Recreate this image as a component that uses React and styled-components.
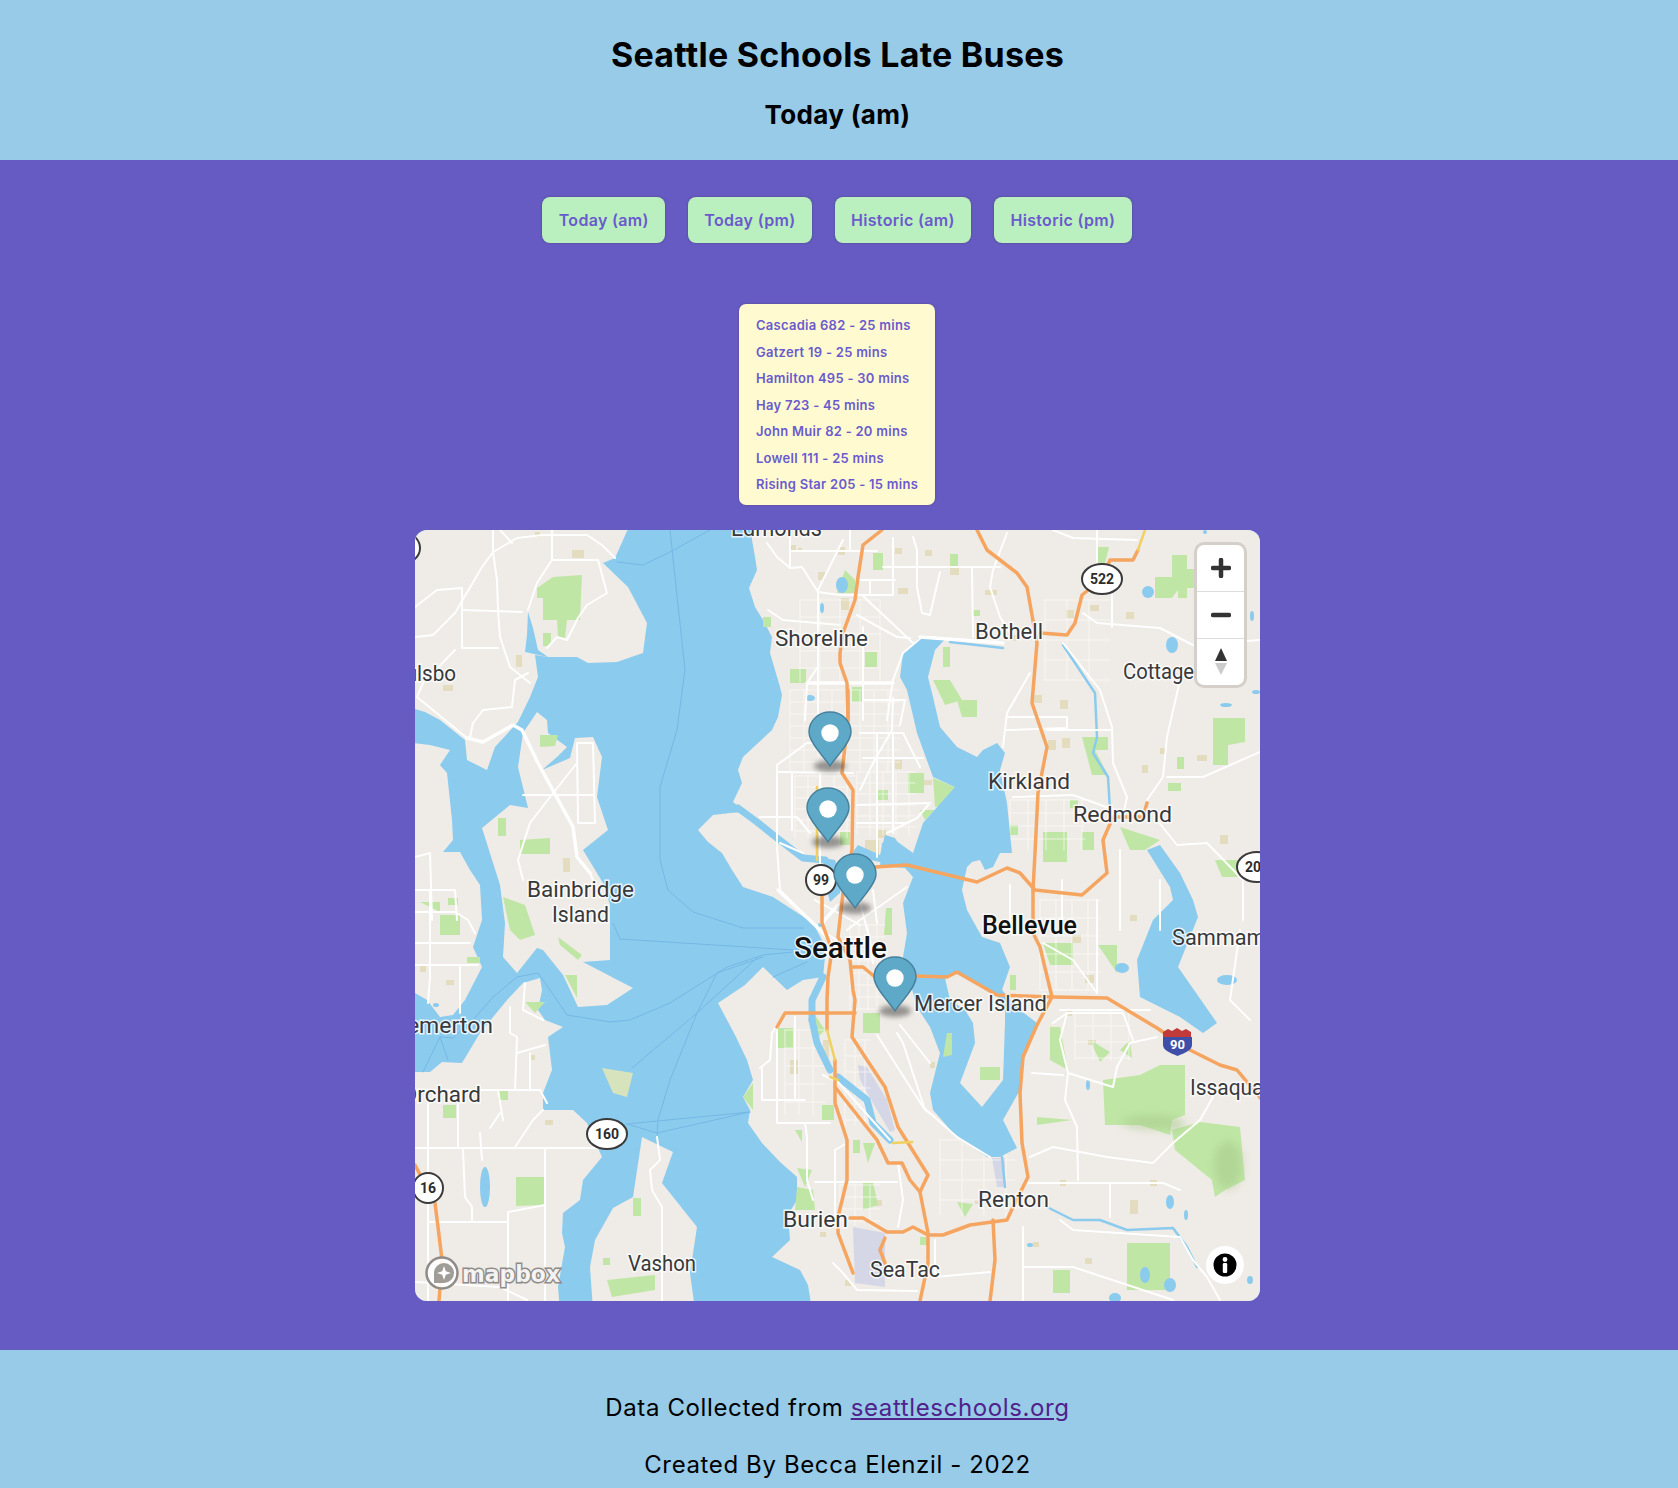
import React from 'react'
import styled, { createGlobalStyle } from 'styled-components'

const GlobalStyle = createGlobalStyle`
  html, body {
    margin: 0;
    padding: 0;
    background: #665ac3;
    font-family: Inter, "Liberation Sans", sans-serif;
  }
`

const Header = styled.header`
  height: 160px;
  padding-right: 3px;
  background: #97cbe8;
  color: #000;
  display: flex;
  flex-direction: column;
  align-items: center;
`

const Title = styled.h1`
  margin: 34px 0 0;
  font-size: 34px;
  line-height: 42px;
  font-weight: 700;
  letter-spacing: 0.25px;
`

const Subtitle = styled.h2`
  margin: 23px 0 0;
  font-size: 26px;
  line-height: 32px;
  font-weight: 700;
  letter-spacing: 0.35px;
`

const Main = styled.main`
  height: 1190px;
  box-sizing: border-box;
  padding: 37px 3px 0 0;
  background: #665ac3;
  display: flex;
  flex-direction: column;
  align-items: center;
`

const ButtonRow = styled.nav`
  display: flex;
  gap: 22.5px;
  margin-right: 1px;
`

const TabButton = styled.button`
  height: 46px;
  padding: 0 16.5px;
  border: 0;
  border-radius: 8px;
  background: #baf0bf;
  box-shadow: 0 0 2px rgba(40, 60, 40, 0.5);
  color: #6a5acd;
  font-family: Inter, "Liberation Sans", sans-serif;
  font-size: 16px;
  font-weight: 600;
  letter-spacing: 0.32px;
`

const LateCard = styled.ul`
  width: 196px;
  height: 201px;
  box-sizing: border-box;
  margin: 61px 1px 0 0;
  padding: 8px 0 0 17px;
  list-style: none;
  border-radius: 7px;
  background: #fffad0;
  box-shadow: 0 0 2px rgba(60, 60, 30, 0.45);
  color: #6a5acd;
  font-size: 13px;
  font-weight: 600;
  letter-spacing: 0.27px;
`

const LateRow = styled.li`
  height: 26.5px;
  line-height: 26.5px;
  white-space: nowrap;
`

const MapFrame = styled.div`
  position: relative;
  width: 845px;
  height: 771px;
  margin-top: 25px;
  overflow: hidden;
  border-radius: 12px;
  background: #8bcbee;
`

const MapArt = styled.svg`
  display: block;
  width: 845px;
  height: 771px;
`

const Water = styled.g`
  fill: #8bcbee;
`

const Land = styled.g`
  fill: #efebe6;
`

const Patches = styled.g`
  fill: ${props => props.$fill};
  opacity: ${props => props.$opacity || 1};
  filter: ${props => (props.$soft ? `blur(${props.$soft}px)` : 'none')};
`

const Lines = styled.g`
  fill: none;
  stroke: ${props => props.$color};
  stroke-width: ${props => props.$width}px;
  stroke-linejoin: round;
  stroke-linecap: round;
  opacity: ${props => props.$opacity || 1};
`

const PlaceName = styled.text`
  font-family: Roboto, "Noto Sans", sans-serif;
  font-size: ${props => props.$size || 22}px;
  font-weight: ${props => props.$weight || 400};
  fill: ${props => props.$fill || '#37393b'};
  stroke: rgba(255, 255, 255, 0.8);
  stroke-width: 3px;
  paint-order: stroke;
`

const ShieldText = styled.text`
  font-family: Roboto, "Noto Sans", sans-serif;
  font-size: ${props => props.$size || 14}px;
  font-weight: 700;
  fill: #2c2c2c;
  text-anchor: middle;
`

const LogoText = styled.text`
  font-family: "DejaVu Sans", sans-serif;
  font-size: 23px;
  font-weight: 700;
  fill: rgba(255, 255, 255, 0.9);
  stroke: #8f8b86;
  stroke-width: 3px;
  paint-order: stroke;
`

const PinMark = styled.svg`
  position: absolute;
  left: ${props => props.$x - 415 - 24}px;
  top: ${props => props.$tip - 530 - 55}px;
  width: 48px;
  height: 68px;
  overflow: visible;
`

const PinShadow = styled.ellipse`
  fill: rgba(60, 60, 60, 0.5);
  filter: blur(2.5px);
`

const Controls = styled.div`
  position: absolute;
  top: 15px;
  right: 16px;
  width: 47px;
  border-radius: 7px;
  background: #fff;
  box-shadow: 0 0 0 3px #d4cfc9;
  display: flex;
  flex-direction: column;
`

const ControlButton = styled.div`
  height: 46px;
  display: flex;
  align-items: center;
  justify-content: center;
  border-top: ${props => (props.$first ? '0' : '1px solid #ddd')};
`

const InfoButton = styled.div`
  position: absolute;
  right: 16px;
  bottom: 17px;
  width: 38px;
  height: 38px;
  border-radius: 50%;
  background: #fff;
  display: flex;
  align-items: center;
  justify-content: center;
`

const Footer = styled.footer`
  height: 138px;
  box-sizing: border-box;
  padding: 43px 3px 0 0;
  background: #97cbe8;
  color: #000;
  font-size: 24px;
  line-height: 29px;
  letter-spacing: 0.62px;
  text-align: center;
  overflow: hidden;
`

const FooterLine = styled.p`
  margin: 0 0 28px;
`

const SourceLink = styled.a`
  color: #50228c;
`

const tabs = ['Today (am)', 'Today (pm)', 'Historic (am)', 'Historic (pm)']

const lateBuses = [
  'Cascadia 682 - 25 mins',
  'Gatzert 19 - 25 mins',
  'Hamilton 495 - 30 mins',
  'Hay 723 - 45 mins',
  'John Muir 82 - 20 mins',
  'Lowell 111 - 25 mins',
  'Rising Star 205 - 15 mins'
]

const landShapes = [
  // east side mainland
  '752,520 752,540 755,557 757,570 749,588 755,607 763,620 772,637 770,653 780,687 782,695 778,717 772,730 743,757 738,770 742,783 733,802 745,812 730,813 713,815 698,830 708,842 722,853 732,870 743,887 773,897 793,910 813,923 822,940 825,957 823,977 803,980 787,990 763,967 745,985 718,1003 735,1035 747,1060 753,1080 743,1097 750,1110 748,1123 762,1143 780,1162 797,1177 797,1200 788,1215 790,1240 772,1257 800,1270 808,1285 812,1310 1270,1310 1270,520',
  // north kitsap
  '405,520 632,520 615,558 603,563 628,587 647,623 643,653 617,662 588,663 577,657 548,657 535,655 538,677 530,697 518,722 495,747 487,770 467,760 465,740 440,720 425,712 405,706',
  // kitsap middle
  '405,742 430,745 450,750 440,765 447,773 452,820 453,840 443,852 460,852 470,870 480,885 482,920 473,947 482,967 465,1000 453,1015 440,1017 427,1000 415,993 405,990',
  // kitsap south
  '405,1072 430,1072 442,1062 462,1063 480,1033 507,1000 523,983 540,978 542,990 538,1010 545,1020 563,1027 548,1037 552,1070 543,1093 543,1110 573,1110 587,1123 602,1157 583,1180 580,1200 563,1213 562,1233 565,1247 558,1287 560,1310 405,1310',
  // bainbridge
  '537,712 547,720 548,733 567,747 557,757 542,770 570,758 575,738 593,737 602,757 597,797 608,830 583,850 603,883 610,905 610,960 583,962 633,988 607,1005 578,1007 563,975 543,950 537,948 517,973 503,957 505,923 500,885 482,828 510,805 528,808 518,767 523,733',
  // vashon
  '642,1137 673,1152 662,1183 697,1227 690,1273 695,1310 593,1310 590,1267 595,1240 613,1208 633,1197'
]

const lakes = [
  '920,637 947,637 935,650 928,677 933,697 940,727 957,747 977,757 983,750 997,743 1005,753 1000,770 1007,803 1012,853 1000,853 993,867 985,870 980,860 972,862 967,867 962,890 967,910 982,937 1000,943 1010,967 1002,990 1020,1010 1037,1023 1023,1057 1020,1090 1003,1120 1017,1148 1000,1157 987,1157 953,1133 933,1110 930,1093 940,1053 930,1027 917,1007 903,957 907,933 903,903 913,877 905,868 880,866 882,843 895,840 913,853 923,823 955,787 933,777 917,733 907,690 900,677 903,653',
  '1147,850 1160,845 1180,873 1193,900 1198,917 1178,967 1217,1023 1203,1033 1180,1017 1140,997 1137,960 1153,920 1173,900 1170,887',
  '823,858 835,860 843,880 840,893 830,902 825,883',
  '525,652 527,635 528,612 533,628 538,650 548,657',
  '858,845 880,855 885,835 895,838 905,855 880,862 850,856'
]

const mercer = '945,978 957,974 997,995 1005,1012 1005,1023 1003,1080 982,1107 960,1083 975,1043 973,1023 965,1010 950,1000'

const ponds = [
  [842, 585, 6, 8], [810, 698, 5, 3], [1148, 592, 6, 6], [1172, 645, 6, 8], [485, 1187, 5, 20],
  [1227, 980, 10, 5], [1122, 968, 7, 5], [1170, 1202, 4, 7], [1186, 1215, 2, 5], [1145, 1275, 5, 8],
  [1170, 1285, 6, 7], [1115, 1298, 6, 5], [1088, 1085, 2, 5], [822, 608, 2, 5], [1205, 532, 2, 2],
  [1256, 692, 4, 2], [1226, 705, 6, 2], [1252, 616, 2, 5], [1030, 1245, 3, 2], [1250, 1280, 3, 4],
  [436, 1005, 3, 2], [820, 925, 2, 2]
]

const parks = [
  '537,588 553,577 582,575 580,620 567,620 565,638 558,637 557,620 543,620 543,598 537,598',
  '543,633 551,633 551,646 543,646', '540,735 558,735 555,746 540,747', '520,840 550,838 550,854 520,854',
  '498,818 506,818 506,836 498,836', '503,897 525,905 535,935 520,940 510,930', '558,937 582,955 578,960 560,945',
  '565,975 577,975 577,998', '525,1002 545,1002 535,1013', '440,915 460,915 460,935 440,935',
  '467,957 480,957 480,963 467,963', '443,1105 456,1105 456,1118 443,1118', '498,1090 508,1090 508,1100 498,1100',
  '743,1097 753,1083 753,1110', '778,1028 793,1028 793,1048 778,1048', '516,1177 544,1177 544,1205 516,1206',
  '607,1280 655,1275 655,1290 612,1297', '633,1198 641,1198 641,1216 633,1216', '603,1258 610,1258 610,1265 603,1265',
  '822,1105 834,1105 834,1120 822,1120', '853,1140 860,1140 860,1153 853,1153', '863,1143 875,1143 868,1163',
  '863,1182 873,1182 878,1205 863,1210', '797,1168 812,1170 805,1187', '797,1187 813,1190 815,1210 795,1210',
  '863,1013 880,1013 880,1033 863,1033', '957,1202 973,1204 965,1217', '920,1237 928,1237 928,1245 920,1245',
  '980,1052 988,1052 988,1060 980,1060', '980,1067 1000,1067 1000,1080 980,1080', '845,570 855,580 855,593 837,593',
  '790,669 806,669 806,683 790,683', '852,687 862,687 862,702 852,702', '865,652 877,652 877,667 865,667',
  '763,617 771,617 771,627 763,627', '950,554 958,554 958,567 950,567', '973,610 980,610 980,616 973,616',
  '933,680 950,680 962,700 945,705', '957,700 977,700 977,717 962,717', '943,647 950,647 950,667 943,667',
  '873,553 883,553 883,570 873,570', '1155,577 1172,577 1172,555 1187,555 1187,569 1195,569 1195,588 1187,588 1187,598 1178,598 1178,590 1172,598 1155,598',
  '1097,547 1109,547 1105,563 1097,563', '1213,718 1245,718 1245,742 1228,745 1228,765 1213,765',
  '1082,737 1108,737 1108,750 1095,750 1108,775 1092,775', '1043,832 1067,832 1067,862 1043,862', '1082,832 1094,832 1094,850 1082,850',
  '908,773 924,773 924,793 908,793', '933,778 955,787 950,805 935,807', '1177,757 1184,757 1184,769 1177,769',
  '1168,783 1181,783 1181,791 1168,791', '1215,860 1237,860 1237,877 1222,877', '1120,827 1160,840 1145,850 1130,850',
  '1103,1080 1140,1075 1160,1065 1185,1065 1185,1115 1172,1120 1170,1135 1140,1125 1105,1125',
  '1172,1130 1200,1122 1240,1127 1245,1180 1225,1190 1215,1197 1212,1180 1175,1150',
  '1043,943 1073,943 1073,965 1050,965', '1098,945 1117,945 1117,973', '1050,1027 1060,1027 1068,1070 1050,1060',
  '1037,1117 1072,1120 1037,1125', '1127,1243 1170,1243 1170,1290 1127,1290', '1053,1270 1070,1270 1070,1293 1053,1293',
  '947,1033 952,1033 952,1055 943,1057', '877,790 888,790 888,800 877,800', '920,810 935,810 925,820',
  '795,1130 802,1130 802,1142', '815,1015 825,1030 815,1040', '420,902 440,902 440,912', '448,898 458,898 458,905 448,905',
  '840,832 850,832 850,845 840,845', '886,908 892,908 892,935 884,935',
  '1010,825 1018,825 1018,835 1010,835', '1070,800 1078,800 1078,808 1070,808', '1210,1150 1235,1150 1235,1170 1210,1170',
  '1090,1040 1110,1052 1100,1062', '1120,1050 1130,1040 1132,1058', '1010,975 1016,975 1016,990 1010,990'
]

const tanPatches = [
  [535, 532, 5, 5], [572, 550, 12, 8], [443, 685, 10, 6], [516, 655, 6, 12], [563, 858, 7, 14], [446, 980, 8, 5],
  [420, 966, 6, 6], [530, 1055, 5, 5], [545, 1120, 8, 5], [790, 545, 6, 6], [838, 547, 7, 8], [818, 572, 7, 8],
  [798, 548, 4, 4], [841, 598, 8, 12], [895, 548, 7, 6], [925, 550, 7, 6], [950, 567, 9, 8], [898, 588, 10, 6],
  [985, 590, 12, 5], [1066, 610, 8, 8], [1090, 605, 9, 6], [1126, 612, 8, 7], [1034, 695, 8, 8], [1060, 700, 8, 9],
  [1010, 635, 7, 6], [1048, 740, 8, 10], [1062, 738, 8, 10], [1160, 748, 6, 6], [1142, 765, 6, 8], [1220, 835, 8, 9],
  [1197, 755, 10, 6], [865, 840, 14, 16], [895, 760, 7, 9], [878, 830, 8, 8], [923, 780, 9, 5], [1088, 745, 5, 5],
  [790, 1060, 8, 14], [823, 1040, 6, 18], [975, 1200, 8, 4], [1072, 935, 9, 8], [1085, 975, 9, 8], [1130, 915, 7, 6],
  [1088, 1040, 8, 5], [1067, 1010, 5, 6], [1060, 1180, 6, 6], [1150, 1180, 7, 6], [1130, 1200, 8, 14], [1033, 1242, 6, 5],
  [1085, 1258, 7, 6], [845, 1280, 6, 6], [930, 1062, 5, 6], [980, 1085, 4, 8], [820, 1232, 6, 5], [875, 1200, 7, 6]
]

const roads = [
  '405,638 433,635 455,613 482,567 493,552 517,538 543,535 587,535 602,545 615,558',
  '493,520 493,552 497,580 498,610 500,637 510,667 530,683',
  '500,530 512,543', '552,530 552,560 598,560 607,593 587,605 578,618 567,640 557,637 547,648',
  '552,560 537,583 528,610', '462,610 522,612', '415,607 437,590 462,588 462,648 498,648',
  '455,650 423,683 417,697 467,738 483,742 513,725 522,730 538,763 573,827 577,857 590,873 600,897',
  '528,673 515,680 512,707 483,710 473,723 470,737', '577,743 593,743 595,823 578,823 577,743', '523,795 593,795',
  '577,763 550,797 530,823 518,860 523,880', '415,857 430,853 432,920', '415,890 455,890 457,920',
  '430,890 430,977 428,1003', '415,912 455,912 468,920 475,933', '415,943 470,943', '415,965 478,965', '460,965 460,1013',
  '525,983 523,1010 543,1020', '510,1007 510,1033 517,1037 515,1090', '517,1053 545,1045', '530,1053 530,1090',
  '415,1090 540,1090 547,1103', '498,1090 503,1120', '415,1148 602,1148', '428,1100 428,1300', '458,1100 458,1148',
  '545,1148 545,1300', '480,1133 482,1160', '463,1150 465,1197 472,1207 472,1222', '428,1222 508,1222 508,1212 545,1205',
  '508,1222 508,1300', '515,1147 533,1120 543,1110', '490,1128 500,1113', '415,1282 500,1287 527,1300',
  '657,1137 660,1160 650,1170 652,1190 662,1207 662,1300',
  '767,543 777,557 790,568 802,567 818,592 840,595 863,595 893,595', '843,540 818,590', '818,592 818,720',
  '790,530 790,568', '850,530 850,550', '792,551 877,551', '862,595 913,643', '768,610 783,620 840,625',
  '857,615 897,637 910,638', '863,627 863,720', '807,683 890,683', '807,683 805,720', '817,668 807,683',
  '870,580 870,595', '893,538 893,595', '860,580 895,580', '883,567 1000,567', '917,550 917,587 922,613 930,615 940,572',
  '913,537 917,550', '972,567 973,637', '922,637 903,653 893,680 887,720', '920,637 1003,643',
  '1097,530 1097,563', '1053,530 1073,538 1137,540', '1007,533 993,570 990,587 1000,617 1010,633',
  '1063,643 1100,690 1112,727 1113,763 1127,797 1123,817', '1083,613 1097,623 1160,628 1193,645 1260,640',
  '1112,580 1112,627', '1180,680 1167,737 1163,777 1147,800', '1260,752 1203,777 1167,777', '1013,797 1073,795 1123,813',
  '1007,717 1067,717 1067,728 1007,730', '1047,730 1110,730', '1030,673 1007,713 1003,747',
  '1157,820 1177,845 1207,843 1243,880 1243,920', '777,765 807,743 848,740', '777,765 777,847 780,890 817,927',
  '778,772 853,773', '792,772 792,830', '820,773 820,863', '760,817 797,817 810,833', '780,843 803,853',
  '893,698 892,730 873,763 860,790', '860,733 903,733 920,767', '857,805 930,803 917,818 887,833',
  '877,733 877,857', '893,733 893,833', '863,758 923,758', '857,823 907,823', '907,887 860,920 847,930',
  '873,890 877,923', '860,903 870,940 873,963', '863,700 905,700', '905,700 900,725',
  '760,1068 770,1060 772,1033 785,1013', '762,1068 762,1100 805,1100', '777,1027 777,1123 830,1123',
  '805,1123 807,1137 807,1180 813,1200', '815,1182 897,1182', '847,1143 835,1150 835,1217', '795,1017 795,1100',
  '823,1075 838,1082 890,1140', '877,1035 923,1107 957,1137 990,1157', '897,1033 903,1043 925,1110 935,1117',
  '930,1063 900,1025', '898,1163 903,1200 898,1227', '833,1263 843,1273 857,1290 917,1291', '935,1240 935,1277 990,1272',
  '1097,900 1097,993', '1043,943 1073,960 1097,993', '1053,1023 1067,1013 1123,1013 1133,1040',
  '1117,1067 1130,1043 1157,1037', '1068,1073 1113,1087 1117,1067', '1067,1013 1060,1040 1068,1073 1065,1100 1077,1127 1078,1180',
  '1032,1073 1063,1075', '1030,1157 1053,1147 1107,1157 1153,1163 1173,1143 1200,1120 1213,1097',
  '1027,1183 1163,1183 1180,1190', '1110,1183 1110,1217', '1060,1220 1073,1230 1180,1237 1193,1260 1207,1277 1220,1300',
  '1023,1267 1073,1267 1173,1300', '1023,1227 1023,1300', '1010,885 1010,930', '1062,880 1062,930', '1120,850 1120,930',
  '1160,880 1160,930', '1240,930 1230,1000 1250,1020', '1060,1010 1150,1010', '820,930 845,945', '815,900 860,925'
]

const thickRoads = [
  '467,738 483,742 513,725 522,730 538,763 573,827 577,857 590,873',
  '893,683 807,683', '920,637 1003,643', '778,890 817,927 835,945', '822,923 838,905'
]

const motorways = [
  '882,530 863,545 858,577 855,600 843,633 840,653 840,663 847,683 848,720 842,773 853,790 852,850 843,893 838,937 850,960 853,990 855,1000 852,1037 867,1060 885,1087 898,1127 928,1175 920,1192 928,1233 928,1263 920,1301',
  '822,880 822,923 832,950 828,977 827,1000 827,1030', '835,1060 835,1103 847,1140 847,1180 838,1217 838,1233 853,1273',
  '835,1087 877,1140 888,1163 902,1163 910,1180 920,1192', '777,1027 785,1013 855,1013',
  '850,1218 863,1218 887,1232 903,1232 913,1227 928,1235 943,1235 970,1225 1007,1220 1013,1207 1028,1177 1022,1143 1020,1093 1023,1057 1037,1025 1052,997 1040,947 1033,933 1033,890',
  '1033,890 1035,853 1038,793 1047,747 1032,703 1037,643 1027,587 1017,573 987,550 977,530',
  '916,976 947,977 957,972 997,995 1053,997 1107,998 1157,1028 1190,1050 1220,1065 1237,1070 1262,1100', '853,967 863,967 875,977',
  '875,867 907,865 977,882 1007,868 1020,873 1035,890 1082,895 1107,873 1103,840 1113,817 1143,817 1147,803',
  '1040,633 1067,635 1075,623 1082,595 1102,579 1110,560 1133,560 1138,550',
  '415,1165 435,1203 438,1227 442,1260 439,1301', '885,1238 880,1250 885,1263', '993,1220 995,1260 990,1301', '848,690 848,720'
]

const yellowRoads = ['827,1030 835,1060', '893,1143 912,1142', '830,1077 838,1080', '1138,550 1145,530', '817,787 817,860']

const rivers = [
  '950,642 1003,648', '1063,645 1095,693 1097,737 1093,753 1108,777 1110,810',
  '1047,1207 1073,1220 1100,1220 1127,1230 1173,1228 1187,1247 1197,1267', '1002,1157 1005,1187'
]

const channels = ['738,808 757,822 777,838 803,858 825,860', '812,1020 817,1043 830,1070', '838,1077 867,1100 873,1123 890,1140', '823,977 812,1000 812,1020']

const ferries = [
  '620,939 793,950', '613,923 620,939',
  '793,952 763,955 727,967 670,1003 630,1020 610,1022 567,1015 550,990 538,973 517,977 493,997 473,1020 453,1038 440,1037 423,1072',
  '440,1037 448,1060', '763,957 717,973 697,1013 670,1080 658,1120 657,1135', '757,958 697,1013 632,1068',
  '617,562 643,565 670,552 710,530', '670,530 685,670 677,730 660,787 660,860 668,890 693,912 743,928 803,928',
  '627,1124 657,1133 750,1112', '627,1124 750,1112', '773,977 807,962'
]

const places = [
  ['Edmonds', 731, 536, 91, 23], ['Shoreline', 775, 646, 93], ['Bothell', 975, 639, 68], ['Cottage', 1123, 679, 71],
  ['Poulsbo', 381, 681, 75], ['Kirkland', 988, 789, 82], ['Redmond', 1073, 822, 99], ['Bainbridge', 527, 897, 107],
  ['Island', 552, 922, 57], ['Seattle', 794, 958, 93, 30, 500, '#111'], ['Bellevue', 982, 934, 95, 25, 500, '#111'],
  ['Sammamish', 1172, 945, 122], ['Mercer Island', 914, 1011, 133], ['Bremerton', 385, 1033, 108], ['Port Orchard', 354, 1102, 127],
  ['Issaquah', 1190, 1095, 85], ['Renton', 978, 1207, 71], ['Burien', 783, 1227, 65], ['SeaTac', 870, 1277, 70], ['Vashon', 628, 1271, 68]
]

const pins = [
  { x: 830, tip: 766 },
  { x: 828, tip: 842 },
  { x: 855, tip: 908 },
  { x: 895, tip: 1011 }
]

// side streets, thin grid of the built up areas
const streetBlocks = [
  [790, 690, 900, 772, 14, 12], [795, 776, 855, 838, 13, 11], [857, 772, 915, 835, 13, 11],
  [800, 600, 880, 682, 20, 17], [850, 925, 885, 1010, 9, 12], [785, 1030, 825, 1115, 14, 18],
  [1040, 900, 1100, 990, 16, 18], [1010, 800, 1085, 850, 18, 13], [845, 1040, 870, 1125, 10, 16],
  [840, 1185, 880, 1225, 15, 12], [940, 1140, 1015, 1215, 22, 20], [1075, 1010, 1130, 1060, 18, 16],
  [1045, 600, 1110, 680, 22, 20]
]

const streets = streetBlocks.flatMap(([x1, y1, x2, y2, dx, dy]) => {
  const list = []
  for (let x = x1; x <= x2; x += dx) list.push(`M${x} ${y1} V${y2}`)
  for (let y = y1; y <= y2; y += dy) list.push(`M${x1} ${y} H${x2}`)
  return list
})

const Road = ({ list }) => list.map(points => <polyline key={points} points={points} />)

const Shield = ({ cx, cy, rx, ry, label, size }) => (
  <g>
    <ellipse cx={cx} cy={cy} rx={rx} ry={ry} fill="#fff" stroke="#3a3a3a" strokeWidth="2" />
    <ShieldText x={cx} y={cy + 5} $size={size}>{label}</ShieldText>
  </g>
)

const MapDrawing = () => (
  <MapArt viewBox="415 530 845 771">
    <Land>
      {landShapes.map(points => <polygon key={points} points={points} />)}
    </Land>
    <Patches $fill="#e3dcbf">
      {tanPatches.map(([x, y, w, h]) => <rect key={`${x}-${y}`} x={x} y={y} width={w} height={h} />)}
    </Patches>
    <Patches $fill="#c0e6a6">
      {parks.map(points => <polygon key={points} points={points} />)}
    </Patches>
    <Patches $fill="#a5c98a" $opacity="0.55" $soft="4">
      <ellipse cx="1152" cy="1122" rx="30" ry="7" />
      <ellipse cx="1228" cy="1165" rx="14" ry="24" />
      <ellipse cx="1175" cy="1125" rx="10" ry="6" />
    </Patches>
    <Patches $fill="#d7e3bd">
      <polygon points="602,1068 633,1073 627,1097 613,1093" />
    </Patches>
    <Patches $fill="#d5d7e6">
      <polygon points="858,1065 867,1067 887,1100 895,1130 890,1132 873,1103 860,1080" />
      <polygon points="853,1227 885,1233 885,1287 855,1283" />
      <polygon points="992,1158 1005,1158 1005,1187 997,1187" />
    </Patches>
    <Lines $color="#fff" $width="1" $opacity="0.6">
      {streets.map(d => <path key={d} d={d} />)}
    </Lines>
    <Water>
      {lakes.map(points => <polygon key={points} points={points} />)}
      {ponds.map(([cx, cy, rx, ry]) => <ellipse key={`${cx}-${cy}`} cx={cx} cy={cy} rx={rx} ry={ry} />)}
    </Water>
    <Land>
      <polygon points={mercer} />
    </Land>
    <Patches $fill="#c0e6a6">
      <polygon points="947,1033 952,1033 952,1055 943,1057" />
      <polygon points="980,1067 1000,1067 1000,1080 980,1080" />
    </Patches>
    <Lines $color="#8bcbee" $width="7"><Road list={channels} /></Lines>
    <Lines $color="#8bcbee" $width="2.5"><Road list={rivers} /></Lines>
    <Lines $color="#6fb3e2" $width="1" $opacity="0.8"><Road list={ferries} /></Lines>
    <Lines $color="#fff" $width="2"><Road list={roads} /></Lines>
    <Lines $color="#fff" $width="3.5"><Road list={thickRoads} /></Lines>
    <Lines $color="#f5a55f" $width="3.5"><Road list={motorways} /></Lines>
    <Lines $color="#f0d060" $width="2.5"><Road list={yellowRoads} /></Lines>

    {places.map(([name, x, y, w, size, weight, fill]) => (
      <PlaceName
        key={name}
        x={x}
        y={y}
        textLength={w}
        lengthAdjust="spacingAndGlyphs"
        $size={size}
        $weight={weight}
        $fill={fill}
      >
        {name}
      </PlaceName>
    ))}

    <Shield cx={1102} cy={579} rx={20} ry={15} label="522" />
    <Shield cx={821} cy={880} rx={15} ry={15} label="99" />
    <Shield cx={607} cy={1134} rx={20} ry={15} label="160" />
    <Shield cx={428} cy={1188} rx={15} ry={15} label="16" />
    <Shield cx={1257} cy={867} rx={20} ry={15} label="202" />
    <Shield cx={404} cy={548} rx={16} ry={15} label="3" />

    <g>
      <path d="M1163 1032 l5 -3 l4 2 l5 -3 l5 3 l4 -2 l5 3 v5 h-28 z" fill="#c03a3a" />
      <path d="M1163 1037 h29 v8 c0 5 -7 8 -14.500 11 c-7.500 -3 -14.500 -6 -14.500 -11 z" fill="#3f4fa8" />
      <text x="1177.500" y="1049" textAnchor="middle" fontFamily="Roboto, sans-serif" fontSize="13" fontWeight="700" fill="#fff">90</text>
    </g>

    <g>
      <circle cx="442" cy="1273" r="15.500" fill="rgba(255,255,255,0.9)" stroke="#8f8b86" strokeWidth="2.500" />
      <path d="M434 1283 v-10 a10 10 0 1 1 10 10 z" fill="#a09c97" />
      <path d="M444 1266 l1.800 5.200 l5.200 1.800 l-5.200 1.800 l-1.800 5.200 l-1.800 -5.200 l-5.200 -1.800 l5.200 -1.800 z" fill="#fff" />
      <LogoText x="462" y="1282" textLength="98" lengthAdjust="spacingAndGlyphs">mapbox</LogoText>
    </g>
  </MapArt>
)

const Pin = ({ x, tip }) => (
  <PinMark $x={x} $tip={tip} viewBox="0 0 48 68">
    <PinShadow cx="24" cy="55" rx="16" ry="6" />
    <path
      d="M24 55 C20 48 3 32 3 21 C3 9.500 12.500 1 24 1 C35.500 1 45 9.500 45 21 C45 32 28 48 24 55 Z"
      fill="#5ea9c8"
      stroke="#45809c"
      strokeWidth="1.400"
    />
    <circle cx="24" cy="22" r="8.700" fill="#fff" />
  </PinMark>
)

const MapControls = () => (
  <Controls>
    <ControlButton $first>
      <svg width="20" height="20" viewBox="0 0 20 20">
        <path d="M10 2 V18 M2 10 H18" stroke="#333" strokeWidth="4.500" strokeLinecap="round" />
      </svg>
    </ControlButton>
    <ControlButton>
      <svg width="20" height="20" viewBox="0 0 20 20">
        <path d="M2 10 H18" stroke="#333" strokeWidth="4.500" strokeLinecap="round" />
      </svg>
    </ControlButton>
    <ControlButton>
      <svg width="16" height="30" viewBox="0 0 16 30">
        <path d="M8 1 L14 14 H2 Z" fill="#333" />
        <path d="M8 28 L14 16 H2 Z" fill="#ccc" />
      </svg>
    </ControlButton>
  </Controls>
)

const App = () => (
  <>
    <GlobalStyle />
    <Header>
      <Title>Seattle Schools Late Buses</Title>
      <Subtitle>Today (am)</Subtitle>
    </Header>
    <Main>
      <ButtonRow>
        {tabs.map(tab => <TabButton key={tab}>{tab}</TabButton>)}
      </ButtonRow>
      <LateCard>
        {lateBuses.map(bus => <LateRow key={bus}>{bus}</LateRow>)}
      </LateCard>
      <MapFrame>
        <MapDrawing />
        {pins.map(pin => <Pin key={pin.tip} x={pin.x} tip={pin.tip} />)}
        <MapControls />
        <InfoButton>
          <svg width="24" height="24" viewBox="0 0 24 24">
            <circle cx="12" cy="12" r="11.500" fill="#000" />
            <circle cx="12" cy="6.500" r="2.400" fill="#fff" />
            <rect x="9.800" y="10" width="4.400" height="10" rx="1.200" fill="#fff" />
          </svg>
        </InfoButton>
      </MapFrame>
    </Main>
    <Footer>
      <FooterLine>Data Collected from <SourceLink href="#">seattleschools.org</SourceLink></FooterLine>
      <FooterLine>Created By Becca Elenzil - 2022</FooterLine>
    </Footer>
  </>
)

export default App
